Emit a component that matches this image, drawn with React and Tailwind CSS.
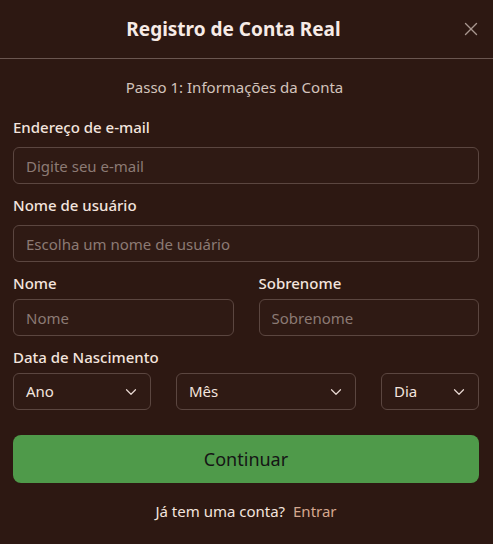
import React from 'react';
import { X, ChevronDown } from 'lucide-react';

const font = { fontFamily: '"Noto Sans", "Open Sans", sans-serif' };

const Field = ({ label, placeholder, gap = 'mb-[10px]' }) => (
  <div className="flex flex-col">
    <label className={"text-[15px] font-medium text-[#f3e4de] leading-5 " + gap}>{label}</label>
    <input
      type="text"
      placeholder={placeholder}
      className="h-[37px] w-full px-3 rounded-md border border-[#5b4640] bg-[#2f1a14] text-[15px] text-[#f3e4de] placeholder:text-[#8c7a74] outline-none"
    />
  </div>
);

const Select = ({ label, className }) => (
  <div className={"h-[37px] flex items-center justify-between pl-3 pr-[10px] rounded-md border border-[#5b4640] bg-[#2f1a14] text-[15px] text-[#f3e4de] " + className}>
    <span>{label}</span>
    <ChevronDown size={18} strokeWidth={1.6} className="text-[#e8d8d2]" />
  </div>
);

const App = () => {
  return (
    <div className="w-[493px] h-[544px] bg-[#2d1812] overflow-hidden" style={font}>
      <div className="h-[59px] flex items-center pl-[13px] pr-[11px] border-b border-[#6a5650]">
        <h1 className="flex-1 pr-[6px] text-center text-[19px] font-bold text-[#f7ebe6]">Registro de Conta Real</h1>
        <button className="text-[#a8968f]">
          <X size={22} strokeWidth={1.5} />
        </button>
      </div>
      <div className="pl-[13px] pr-[14px] pt-[18px]">
        <p className="pr-[23px] text-center text-[15px] text-[#d3c3bc] leading-5 mb-[20px]">Passo 1: Informações da Conta</p>
        <div className="flex flex-col gap-[11px]">
          <Field label="Endereço de e-mail" placeholder="Digite seu e-mail" />
          <Field label="Nome de usuário" placeholder="Escolha um nome de usuário" />
          <div className="flex gap-[25px]">
            <div className="flex-1"><Field label="Nome" placeholder="Nome" gap="mb-[6px]" /></div>
            <div className="flex-1"><Field label="Sobrenome" placeholder="Sobrenome" gap="mb-[6px]" /></div>
          </div>
          <div className="flex flex-col">
            <label className="text-[15px] font-medium text-[#f3e4de] leading-5 mb-[6px]">Data de Nascimento</label>
            <div className="flex gap-[25px]">
              <Select label="Ano" className="w-[138px]" />
              <Select label="Mês" className="flex-1" />
              <Select label="Dia" className="w-[98px]" />
            </div>
          </div>
        </div>
        <button className="mt-[25px] w-full h-[48px] rounded-lg bg-[#4f9a4a] text-[18px] text-[#151515]">Continuar</button>
        <p className="mt-[18px] text-center text-[15px] leading-5 text-[#f3e4de]">
          Já tem uma conta? <span className="ml-1 text-[#d6a78e]">Entrar</span>
        </p>
      </div>
    </div>
  );
};

export default App;
